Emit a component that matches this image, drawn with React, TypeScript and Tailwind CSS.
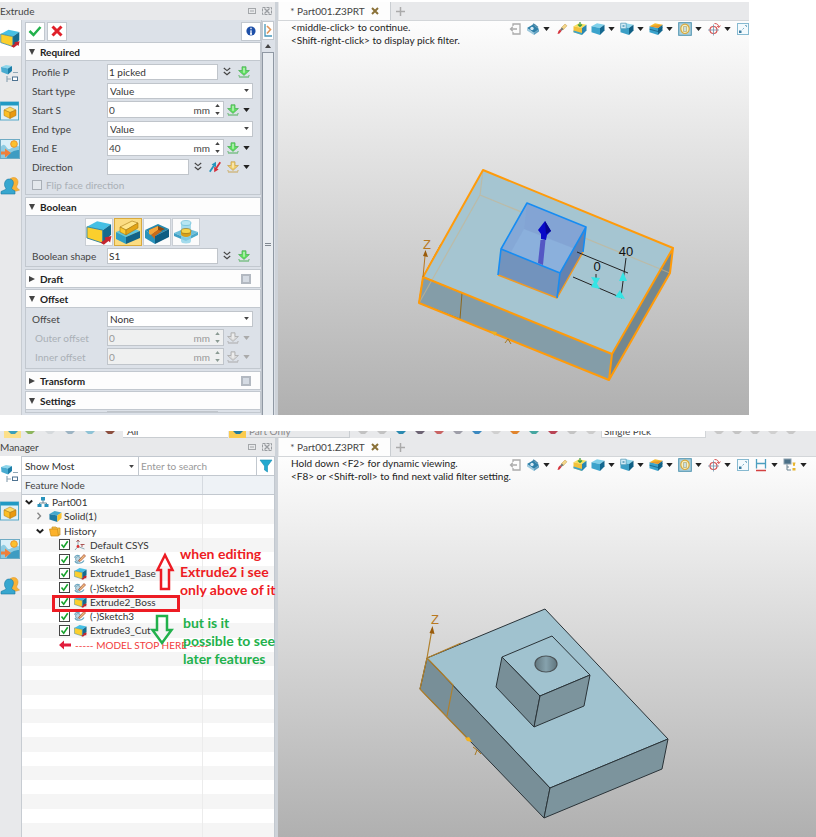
import type { ReactNode } from 'react'

const UI_FONT = "font-['Lato','Open_Sans',sans-serif]"

// ─── Small glyphs ─────────────────────────────────────────────────────────────

function Caret({ className = 'text-[#222]' }: { className?: string }) {
  return (
    <svg viewBox="0 0 8 5" className={`w-[7px] h-1 shrink-0 ${className}`} aria-hidden>
      <path d="M0 0h8L4 5z" fill="currentColor" />
    </svg>
  )
}

function DownArrow({ tone = 'green' }: { tone?: 'green' | 'gold' | 'gray' }) {
  const fill = tone === 'green' ? '#5fe05f' : tone === 'gold' ? '#f0cf6a' : '#dcdcdc'
  const line = tone === 'green' ? '#4fb05a' : tone === 'gold' ? '#c9a655' : '#a9a9a9'
  return (
    <svg viewBox="0 0 12 12" className="size-3" aria-hidden>
      <path d="M4 .8h4v3.700h3.400L6 9.400.6 4.500H4z" fill={fill} stroke={line} strokeWidth="0.8" />
      <path d="M1 11h10M1 9.200v1M11 9.200v1" stroke={line} strokeWidth="1.2" />
      <path d="M6 1.8v5" stroke="#fff" strokeWidth="0.9" />
    </svg>
  )
}

function DoubleChevron() {
  return (
    <svg viewBox="0 0 8 9" className="w-2 h-[9px]" fill="none" stroke="#444" strokeWidth="1.2" aria-hidden>
      <path d="M.8 1 4 3.6 7.200 1M.8 5 4 7.800 7.200 5" />
    </svg>
  )
}

function FlipArrows() {
  return (
    <svg viewBox="0 0 12 12" className="size-3" aria-hidden>
      <path d="M.8 10.800 5 4.500" stroke="#2495bd" strokeWidth="1.8" />
      <path d="M7 .8v5.400L2.600 3.600z" fill="#2495bd" />
      <path d="M11.300 1.200 7 7.500" stroke="#d32f3c" strokeWidth="1.8" />
      <path d="M5.200 11.200V5.800l4.400 2.600z" fill="#d32f3c" />
    </svg>
  )
}

// ─── Solid icons ──────────────────────────────────────────────────────────────

type CubeProps = { top?: string; left?: string; right?: string; className?: string; children?: ReactNode }

function Cube({ top = '#7fd0ea', left = '#3ba3cc', right = '#14688f', className = 'size-[14px]', children }: CubeProps) {
  return (
    <svg viewBox="0 0 14 14" className={`shrink-0 ${className}`} aria-hidden>
      <path d="M.5 4.200 6 1.200l7.500 1.600L9 6z" fill={top} />
      <path d="M.5 4.200 9 6v7L.5 10.200z" fill={left} />
      <path d="m9 6 4.500-3.200v5.700L9 13z" fill={right} />
      {children}
    </svg>
  )
}

function ExtrudeIcon({ className = 'size-[14px]' }: { className?: string }) {
  return (
    <Cube top="#45bfe4" left="#fbcf2d" right="#146b8f" className={className}>
      <path d="M.5 4.200 9 6v7L.5 10.200z" fill="none" stroke="#2b7fa0" strokeWidth=".5" />
      <path d="m7.800 12.600 2.600-1.600-.4-1.100 3.700-.7-.7 3.400-.9-.7-2.500 1.900z" fill="#c4242f" />
    </Cube>
  )
}

function BossIcon() {
  return (
    <svg viewBox="0 0 26 26" className="size-[26px]" aria-hidden>
      <path d="M1 13 14 8l11 4-14 6z" fill="#5cc6e0" />
      <path d="m1 13 10 5v7L1 20z" fill="#2e9fc4" />
      <path d="M11 18 25 12v7l-14 6z" fill="#126387" />
      <path d="M5 8 17 2l6 2-12 7z" fill="#ffe58a" stroke="#a87a14" strokeWidth=".6" />
      <path d="m5 8 6 3v5l-6-3z" fill="#fcc92f" stroke="#a87a14" strokeWidth=".6" />
      <path d="m11 11 12-7v5l-12 7z" fill="#e3a414" stroke="#a87a14" strokeWidth=".6" />
    </svg>
  )
}

function CutIcon() {
  return (
    <svg viewBox="0 0 26 26" className="size-[26px]" aria-hidden>
      <path d="M1 11 14 5l11 5-14 7z" fill="#2489ae" />
      <path d="m1 11 10 6v8L1 19z" fill="#2a93bb" />
      <path d="m11 17 14-7v8l-14 7z" fill="#0f5d82" />
      <path d="m5 11 9-4 7 3-10 5z" fill="#8b4a12" />
      <path d="m5 11 9-4v4l-7 5-2-1z" fill="#f5a53a" />
      <path d="m7 16 7-5 4 1-7 5v3z" fill="#cc6a18" />
    </svg>
  )
}

function IntersectIcon() {
  return (
    <svg viewBox="0 0 26 26" className="size-[26px]" aria-hidden>
      <path d="M1 14 13 9l12 4-12 6z" fill="#6bbfda" />
      <path d="m1 14 12 5v3L1 17z" fill="#3f9fc4" />
      <path d="m13 19 12-6v3l-12 6z" fill="#4aa8c9" />
      <path d="M8 4v18a5 2.500 0 0 0 10 0V4z" fill="#8fd3e8" opacity=".8" />
      <ellipse cx="13" cy="4" rx="5" ry="2.500" fill="#b8e6f2" stroke="#5cb5d2" strokeWidth=".6" />
      <path d="M8 12v3a5 3 0 0 0 10 0v-3z" fill="#d99f18" />
      <ellipse cx="13" cy="12" rx="5" ry="2.500" fill="#f6d44a" stroke="#8b6a18" strokeWidth=".6" />
    </svg>
  )
}

function TreeTabIcon() {
  return (
    <svg viewBox="0 0 20 20" className="size-5" aria-hidden>
      <path d="m1 3 5-2 6 1-4 2.500z" fill="#8ed6ec" />
      <path d="m1 3 7 1.500v6L1.500 8z" fill="#48abd0" />
      <path d="m8 4.500 4-2.500v5l-4 3.500z" fill="#1d7ea8" />
      <path d="M13 8.500h5M7 12v6M7 15h4" stroke="#8fa6b5" strokeWidth="1.200" fill="none" />
      <rect x="12.500" y="13" width="5" height="3.500" fill="#fff" stroke="#4f7391" />
    </svg>
  )
}

function WindowTabIcon() {
  return (
    <svg viewBox="0 0 20 20" className="size-5" aria-hidden>
      <rect x=".5" y="1" width="18" height="18" fill="#dff0f7" stroke="#57a9c9" />
      <rect x=".5" y="1" width="18" height="3.500" fill="#219ac4" />
      <path d="m4 9 6-3 6 3-6 2.500z" fill="#ffdc66" stroke="#a87410" strokeWidth=".5" />
      <path d="m4 9 6 2.500v6L4 14.500z" fill="#fbbf25" stroke="#a87410" strokeWidth=".5" />
      <path d="M16 9v5.500l-6 3v-6z" fill="#e9990f" stroke="#a87410" strokeWidth=".5" />
    </svg>
  )
}

function SceneTabIcon() {
  return (
    <svg viewBox="0 0 20 20" className="size-5" aria-hidden>
      <rect width="20" height="20" fill="#d9eff8" />
      <path d="M0 9c5-8 6 1 9 1s6-6 11-2v12H0z" fill="#8ccbe2" />
      <path d="M6 20c3-7 8-9 14-9v9z" fill="#3f9cc2" />
      <circle cx="14" cy="5" r="3.300" fill="#fcc12d" stroke="#f0952a" />
      <path d="M0 12.500h5v-3l6 4.500-6 4.500v-3H0z" fill="#f0803a" />
      <rect x=".5" y=".5" width="19" height="19" fill="none" stroke="#6fabc4" />
    </svg>
  )
}

function UsersTabIcon() {
  return (
    <svg viewBox="0 0 20 20" className="size-5" aria-hidden>
      <path d="M10 3c4-3 8-1 8 3 0 3-2 4-1 6l2.500 2-3 1h-6z" fill="#f9b234" stroke="#e09a2c" strokeWidth=".6" />
      <path d="M9 3c4 0 5 3 4 6s-2 3-.5 4.500l2.500 1.500v3H1v-2.500l4.500-2c1.500-1-1-2-1-5S6 3 9 3z" fill="#37a7cf" stroke="#1b7ba3" strokeWidth=".6" />
    </svg>
  )
}

// ─── View toolbar icons ───────────────────────────────────────────────────────

const toolIcons: Record<string, ReactNode> = {
  exit: (
    <svg viewBox="0 0 14 14" className="size-[14px]" fill="none" stroke="#ababab" strokeWidth="1.300">
      <path d="M5 4V2h7v10H5v-2M9 7H2.500M4.800 4.800 2.500 7l2.300 2.200" />
    </svg>
  ),
  camera: (
    <svg viewBox="0 0 14 14" className="size-[14px]">
      <path d="m1 6 6-3.500L13 7l-5 4z" fill="#2e7fa8" />
      <path d="m1 6 7 5v2L1 8.500z" fill="#9cc9de" />
      <path d="m8 11 5-4v2.500L8 13z" fill="#5f9fc0" />
      <circle cx="6" cy="6.500" r="1.700" fill="#d8ebf5" />
      <path d="m7 2 2.500 1.500M9.500 3.500 12 5.500" stroke="#4b88a8" strokeWidth="1.500" />
    </svg>
  ),
  eraser: (
    <svg viewBox="0 0 14 14" className="size-[14px]">
      <path d="m6 6 4-4 2 1.800L8 8z" fill="#f3d789" stroke="#c69b4a" strokeWidth=".5" />
      <path d="m5 7.500 2-2L8.500 7l-2 2z" fill="#777" />
      <path d="M3.500 9 5 7.500 6.500 9 4.500 11.500 2.500 12z" fill="#d5333c" />
    </svg>
  ),
  paintBox: (
    <Cube top="#f5e15c" left="#f3c23b" right="#2c87b0">
      <path d="M.5 8.500 9 11v2L.5 10.200z" fill="#3ba3cc" />
      <path d="M7 0v4M5 2.500l2 2 2-2" stroke="#3a9a46" strokeWidth="1.200" fill="none" />
    </Cube>
  ),
  shaded: <Cube />,
  front: (
    <Cube top="#8ed6ec" left="#3b9fc6" right="#106085">
      <path d="M.7 1.200h5.500v5.500H.7z" fill="#d3ecf6" stroke="#5a9fbd" strokeWidth=".8" />
      <path d="M2.500 3h2v2h-2z" fill="#6eabc6" />
    </Cube>
  ),
  section: (
    <Cube top="#f6bb2c" left="#3ba3cc" right="#14688f">
      <path d="m.5 4.200 13-1.400L9 6z" fill="#e8982a" />
      <path d="M.5 7.200 9 9.500l4.500-4" stroke="#0b4b69" fill="none" strokeWidth=".6" />
    </Cube>
  ),
  zoomFit: (
    <svg viewBox="0 0 14 14" className="size-[14px]">
      <rect x=".7" y=".7" width="12.600" height="12.600" fill="#a9d0df" stroke="#4f93b0" />
      <ellipse cx="7" cy="6.800" rx="4.200" ry="4.700" fill="#f9f0bd" stroke="#d9a83c" strokeWidth="1.200" />
      <path d="M5.500 4.500h3v5h-3z" fill="#c9dfe3" stroke="#99905a" strokeWidth=".5" />
    </svg>
  ),
  target: (
    <svg viewBox="0 0 14 14" className="size-[14px]" fill="none">
      <circle cx="6.500" cy="8" r="3.500" stroke="#d65050" strokeWidth="1.200" />
      <path d="M6.500 2.500v11M1 8h11" stroke="#6f93ac" strokeWidth=".8" />
      <path d="M7.500 1.500c3 0 4 1.500 4.500 3.500m-2-1 2 1.500 1.300-2" stroke="#d65050" />
    </svg>
  ),
  frame: (
    <svg viewBox="0 0 14 14" className="size-[14px]">
      <rect x="1.500" y="1.500" width="11" height="11" fill="#f3fafd" stroke="#86b9d0" />
      <path d="M9 3.500h1.500V5M6.500 7.500 8 6" stroke="#7fb0c8" fill="none" />
      <rect x="3" y="8.500" width="2.500" height="2.500" fill="#3b7b9f" />
    </svg>
  ),
  measure: (
    <svg viewBox="0 0 14 14" className="size-[14px]">
      <path d="M2.500 1v9.500M11.500 1v9.500M3 5.500h8" stroke="#4b9fc0" strokeWidth="1.300" />
      <path d="M2 12.500h10" stroke="#d34141" strokeWidth="1.500" />
    </svg>
  ),
  display: (
    <svg viewBox="0 0 14 14" className="size-[14px]">
      <rect x="1" y="1" width="7" height="5" fill="#4b7087" stroke="#8ba0ad" />
      <path d="M4 6.500V12h4M4 9h2" stroke="#6c8492" fill="none" />
      <path d="M9.500 4.500h3L11.700 8h-1.400zM9.500 10h3v2.500h-3z" fill="#e8b52f" />
    </svg>
  ),
}

type Tool = { icon: string; label: string; menu?: boolean }

const tools: Tool[] = [
  { icon: 'exit', label: 'Exit' },
  { icon: 'camera', label: 'View', menu: true },
  { icon: 'eraser', label: 'Erase' },
  { icon: 'paintBox', label: 'Face color' },
  { icon: 'shaded', label: 'Shaded', menu: true },
  { icon: 'front', label: 'Orientation', menu: true },
  { icon: 'section', label: 'Section', menu: true },
  { icon: 'zoomFit', label: 'Zoom', menu: true },
  { icon: 'target', label: 'Pick', menu: true },
  { icon: 'frame', label: 'Fit' },
  { icon: 'measure', label: 'Measure', menu: true },
  { icon: 'display', label: 'Display', menu: true },
]

// ─── Shared window parts ──────────────────────────────────────────────────────

function TitleBar({ title }: { title: string }) {
  return (
    <div className="flex h-[18px] shrink-0 items-center pr-[3px] text-[#444]">
      <h2 className="flex-1">{title}</h2>
      <button type="button" aria-label="Float panel" className="mr-[5px]">
        <svg viewBox="0 0 10 8" className="h-2 w-[10px]" fill="none" stroke="#a4a7aa">
          <rect x="1.500" y="1.500" width="7" height="5" />
          <path d="M3 4h4" />
        </svg>
      </button>
      <button type="button" aria-label="Close panel">
        <svg viewBox="0 0 10 8" className="h-2 w-[10px]" fill="none" stroke="#999ca0">
          <rect x=".5" y=".5" width="9" height="7" strokeDasharray="3 1" />
          <path d="m2.500 1.500 5 5m0-5-5 5" strokeWidth="1.300" />
        </svg>
      </button>
    </div>
  )
}

function SideTabs({ withFeature }: { withFeature?: boolean }) {
  return (
    <nav className="flex w-[22px] shrink-0 flex-col items-start border-r border-[#c7ccd2]">
      {withFeature && (
        <button type="button" aria-label="Feature" className="flex h-9 w-full items-center bg-white">
          <ExtrudeIcon className="size-5" />
        </button>
      )}
      <button
        type="button"
        aria-label="Tree"
        className={`flex h-9 w-full items-center ${withFeature ? '' : 'bg-white'}`}
      >
        <TreeTabIcon />
      </button>
      <button type="button" aria-label="Part view" className="flex h-[38px] w-full items-center"><WindowTabIcon /></button>
      <button type="button" aria-label="Scene" className="flex h-[37px] w-full items-center"><SceneTabIcon /></button>
      <button type="button" aria-label="Roles" className="flex h-[37px] w-full items-center"><UsersTabIcon /></button>
    </nav>
  )
}

function Viewport({ hints, children }: { hints: string[]; children: ReactNode }) {
  return (
    <div className="flex min-w-0 flex-1 flex-col">
      <div className="flex h-[18px] shrink-0 items-center pl-px">
        <button type="button" className="flex h-full w-28 items-center justify-center gap-[6px] border-r border-[#c9cdd1] bg-[#fdfdfd] text-[#444]">
          <span>* Part001.Z3PRT</span>
          <svg viewBox="0 0 8 8" className="size-2" stroke="#8a7137" strokeWidth="2"><path d="m1 1 6 6m0-6L1 7" /></svg>
        </button>
        <button type="button" aria-label="New tab" className="ml-[5px]">
          <svg viewBox="0 0 9 9" className="size-[9px]" stroke="#aaa" strokeWidth="1.500"><path d="M4.500 0v9M0 4.500h9" /></svg>
        </button>
      </div>
      <div className="flex-1 overflow-hidden border-t border-[#d3d6d9] bg-linear-to-b from-[#fdfdfd] to-[#b0b0b0]">
        <div className="flex h-[29px]">
          <div className="w-[230px] shrink-0 pl-[13px] leading-[13px] whitespace-nowrap text-[#222]">
            {hints.map(h => <p key={h}>{h}</p>)}
          </div>
          <div className="flex min-w-0 flex-1 overflow-hidden">
            {tools.map(t => (
              <button
                key={t.icon}
                type="button"
                aria-label={t.label}
                className={`flex h-4 shrink-0 items-center gap-[3px] ${t.menu ? 'w-[29px]' : 'w-[18px]'}`}
              >
                {toolIcons[t.icon]}
                {t.menu && <Caret />}
              </button>
            ))}
          </div>
        </div>
        {children}
      </div>
    </div>
  )
}

// ─── Extrude form ─────────────────────────────────────────────────────────────

function Section({ title, open, check, children }: { title: string; open?: boolean; check?: boolean; children?: ReactNode }) {
  return (
    <section className={`border border-[#c2c8cf] bg-[#dce1e8] ${open ? 'mb-[2px]' : 'mb-px'}`}>
      <div className="flex h-[17px] items-center bg-[#fdfdfd] pr-[9px] pl-[3px]">
        <svg viewBox="0 0 7 7" className="mr-[5px] size-[6px]" fill="#444" aria-hidden>
          <path d={open ? 'M0 0h7L3.500 7z' : 'M0 0l7 3.500L0 7z'} />
        </svg>
        <h3 className="flex-1 font-bold text-[#222]">{title}</h3>
        {check && (
          <input type="checkbox" aria-label={title} className="size-[10px] appearance-none border-2 border-[#b3b9c1] bg-[#d5dbe3]" />
        )}
      </div>
      {children}
    </section>
  )
}

function Row({ label, id, off, children }: { label: string; id: string; off?: boolean; children: ReactNode }) {
  return (
    <div className="flex h-[19px] items-center pl-[6px]">
      <label htmlFor={id} className={`w-[75px] shrink-0 whitespace-nowrap ${off ? 'pl-[3px] text-[#aab0b6]' : 'text-[#444]'}`}>{label}</label>
      {children}
    </div>
  )
}

function PickBox({ id, value, short }: { id: string; value: string; short?: boolean }) {
  return (
    <>
      <input id={id} defaultValue={value} className={`h-4 border border-[#c0c5cb] bg-white px-px text-[#333] ${short ? 'w-[82px]' : 'w-[111px]'}`} />
      <button type="button" aria-label="Expand" className="ml-[5px]"><DoubleChevron /></button>
    </>
  )
}

function SelectBox({ id, value }: { id: string; value: string }) {
  return (
    <div className="relative flex w-[146px] items-center">
      <select id={id} className="h-4 w-full appearance-none border border-[#c0c5cb] bg-white px-[2px] text-[#333]">
        <option>{value}</option>
      </select>
      <svg viewBox="0 0 8 5" className="pointer-events-none absolute right-1 h-[3px] w-[5px]" aria-hidden><path d="M0 0h8L4 5z" fill="#444" /></svg>
    </div>
  )
}

function SpinBox({ id, value, off }: { id: string; value: string; off?: boolean }) {
  return (
    <>
      <div className={`flex h-[17px] w-[117px] items-center border border-[#c0c5cb] pr-[3px] ${off ? 'bg-[#eff0f0] text-[#999]' : 'bg-white text-[#444]'}`}>
        <input id={id} defaultValue={value} disabled={off} className="w-full min-w-0 flex-1 px-px" />
        <span className="mr-[5px]">mm</span>
        <span className="flex flex-col gap-[5px]">
          <button type="button" aria-label="Increase" disabled={off}>
            <svg viewBox="0 0 6 4" className="block h-[3px] w-[5px]" fill={off ? '#8a9a92' : '#444'}><path d="M0 4h6L3 0z" /></svg>
          </button>
          <button type="button" aria-label="Decrease" disabled={off}>
            <svg viewBox="0 0 6 4" className="block h-[3px] w-[5px]" fill={off ? '#8a9a92' : '#444'}><path d="M0 0h6L3 4z" /></svg>
          </button>
        </span>
      </div>
      <button type="button" aria-label="Options" disabled={off} className="ml-[3px] flex items-center gap-1">
        <DownArrow tone={off ? 'gray' : 'green'} />
        <Caret className={off ? 'text-[#aaa]' : 'text-[#222]'} />
      </button>
    </>
  )
}

const booleanModes = [
  { label: 'Base', icon: <ExtrudeIcon className="size-[26px]" /> },
  { label: 'Add', icon: <BossIcon />, active: true },
  { label: 'Remove', icon: <CutIcon /> },
  { label: 'Intersect', icon: <IntersectIcon /> },
]

function ExtrudePanel() {
  return (
    <form className="flex min-w-0 flex-1">
      <div className="w-[239px] bg-[#dce1e8] pl-[3px]">
        <div className="flex h-[22px] items-center">
          <button type="button" aria-label="OK" className="flex h-[19px] w-5 items-center justify-center border border-[#c2c8cf] bg-white">
            <svg viewBox="0 0 14 12" className="h-3 w-[14px]" fill="none" stroke="#22b14c" strokeWidth="2.500"><path d="m1.500 6 4 4 7-8" /></svg>
          </button>
          <button type="button" aria-label="Cancel" className="ml-[2px] flex h-[19px] w-5 items-center justify-center border border-[#c2c8cf] bg-white">
            <svg viewBox="0 0 12 12" className="size-3" stroke="#e0202a" strokeWidth="3"><path d="m1.500 1.500 9 9m0-9-9 9" /></svg>
          </button>
          <button type="button" aria-label="Info" className="ml-auto flex h-[19px] w-5 items-center justify-center border border-[#c2c8cf] bg-white">
            <svg viewBox="0 0 10 10" className="size-[10px]">
              <circle cx="5" cy="5" r="4.600" fill="#1d4fa8" />
              <path d="M5 1.800v1.400M5 4.200V8M4 8h2" stroke="#fff" strokeWidth="1.300" />
            </svg>
          </button>
        </div>

        <Section title="Required" open>
          <div className="border-t border-[#c2c8cf] pt-px">
            <Row label="Profile P" id="profile">
              <PickBox id="profile" value="1 picked" />
              <button type="button" aria-label="Pick" className="ml-[7px]"><DownArrow /></button>
            </Row>
            <Row label="Start type" id="start-type"><SelectBox id="start-type" value="Value" /></Row>
            <Row label="Start S" id="start"><SpinBox id="start" value="0" /></Row>
            <Row label="End type" id="end-type"><SelectBox id="end-type" value="Value" /></Row>
            <Row label="End E" id="end"><SpinBox id="end" value="40" /></Row>
            <Row label="Direction" id="direction">
              <PickBox id="direction" value="" short />
              <button type="button" aria-label="Reverse" className="ml-[7px]"><FlipArrows /></button>
              <button type="button" aria-label="Options" className="ml-[6px] flex items-center gap-1">
                <DownArrow tone="gold" />
                <Caret />
              </button>
            </Row>
            <div className="flex h-[18px] items-center gap-1 pl-[6px] text-[#aab0b6]">
              <input id="flip" type="checkbox" disabled className="size-[10px] appearance-none border border-[#a9afb6] bg-[#e4e8ec]" />
              <label htmlFor="flip">Flip face direction</label>
            </div>
          </div>
        </Section>

        <Section title="Boolean" open>
          <div className="border-t border-[#c2c8cf] pt-[2px] pb-px">
            <div className="flex gap-px pl-[59px]">
              {booleanModes.map(m => (
                <button
                  key={m.label}
                  type="button"
                  aria-label={m.label}
                  className={`flex size-7 items-center justify-center border ${m.active ? 'border-[#d9a93c] bg-[#fbdc82]' : 'border-[#c9ced4] bg-[#fbfbfb]'}`}
                >
                  {m.icon}
                </button>
              ))}
            </div>
            <Row label="Boolean shape" id="shape">
              <PickBox id="shape" value="S1" />
              <button type="button" aria-label="Pick" className="ml-[7px]"><DownArrow /></button>
            </Row>
          </div>
        </Section>

        <Section title="Draft" check />

        <Section title="Offset" open>
          <div className="border-t border-[#c2c8cf] pt-px pb-[2px]">
            <Row label="Offset" id="offset"><SelectBox id="offset" value="None" /></Row>
            <Row label="Outer offset" id="outer" off><SpinBox id="outer" value="0" off /></Row>
            <Row label="Inner offset" id="inner" off><SpinBox id="inner" value="0" off /></Row>
          </div>
        </Section>

        <Section title="Transform" check />

        <Section title="Settings" open>
          <div className="h-[3px] overflow-hidden border-t border-[#c2c8cf] pt-px pl-[81px]">
            <div className="h-4 w-[111px] border border-[#c0c5cb] bg-white" />
          </div>
        </Section>
      </div>

      {/* Panel scrollbar */}
      <div className="flex min-w-0 flex-1 flex-col border-l border-[#c2c8cf] bg-[#dce1e8] pr-px">
        <button type="button" aria-label="Help" className="mt-px flex h-[19px] items-center justify-center border border-[#c2c8cf] bg-white">
          <svg viewBox="0 0 8 13" className="h-[13px] w-2" fill="none">
            <path d="M1 0v12h7" stroke="#4797bb" strokeWidth="1.300" />
            <path d="m3 2 3.500 3.500L3 9.500" stroke="#e0965a" strokeWidth="1.600" />
          </svg>
        </button>
        <div className="flex h-3 items-center justify-center"><svg viewBox="0 0 6 4" className="h-1 w-[6px]" fill="#444"><path d="M0 4h6L3 0z" /></svg></div>
        <div className="flex flex-1 items-center justify-center border border-b-0 border-[#8f98a3] bg-[#e9edf1] pt-5">
          <span className="h-[3px] w-[6px] border-y border-[#808890]" />
        </div>
      </div>
    </form>
  )
}

// ─── Manager tree ─────────────────────────────────────────────────────────────

const featureIcons: Record<string, ReactNode> = {
  csys: (
    <svg viewBox="0 0 12 12" className="size-3" fill="none">
      <path d="M4 1v6.500l6.500 2.500M4 7.500 1 11" stroke="#8fa9b5" />
      <path d="m2.500 3 1.500-2 1.500 2M8 5.500V8M6.500 5.500h4" stroke="#a34646" strokeWidth=".9" />
      <circle cx="4" cy="7.500" r="1.400" fill="#d33" />
    </svg>
  ),
  sketch: (
    <svg viewBox="0 0 12 12" className="size-3">
      <path d="M.8 5c0-3 3-3 5-2M1 8c1 3 7 3 9-.5" stroke="#6fa9c2" fill="none" strokeWidth="1.200" />
      <circle cx="4" cy="6" r="2.500" fill="#bcd9e4" stroke="#5d8ea5" strokeWidth=".7" />
      <path d="m4.500 7.500 5.500-6 1.500 1.500L6 8.500z" fill="#f0c07a" stroke="#a03a2c" strokeWidth=".7" />
    </svg>
  ),
  extrude: <ExtrudeIcon className="size-[13px]" />,
}

const features = [
  { name: 'Default CSYS', icon: 'csys' },
  { name: 'Sketch1', icon: 'sketch' },
  { name: 'Extrude1_Base', icon: 'extrude' },
  { name: '(-)Sketch2', icon: 'sketch' },
  { name: 'Extrude2_Boss', icon: 'extrude' },
  { name: '(-)Sketch3', icon: 'sketch' },
  { name: 'Extrude3_Cut', icon: 'extrude' },
]

function Chevron({ open }: { open?: boolean }) {
  return (
    <svg viewBox="0 0 8 8" className="size-2 shrink-0" fill="none" stroke={open ? '#222' : '#888'} strokeWidth={open ? 2 : 1.4} aria-hidden>
      <path d={open ? 'm.8 2.500 3.200 3 3.200-3' : 'm2.500.8 3 3.200-3 3.200'} />
    </svg>
  )
}

function TreeRow({ className = '', children }: { className?: string; children?: ReactNode }) {
  return (
    <li className="flex odd:bg-white even:bg-[#f5f5f5]">
      <div className={`flex w-[181px] items-center border-r border-[#ececec] whitespace-nowrap text-[#333] ${className}`}>{children}</div>
    </li>
  )
}

function Annotations() {
  return (
    <div className="absolute inset-0 text-sm leading-[18px] font-bold whitespace-nowrap">
      <div className="absolute top-[100px] left-[30px] h-[17px] w-[128px] border-3 border-[#ed1c24]" />
      <svg viewBox="0 0 20 40" className="absolute top-[57px] left-[133px] h-10 w-5" fill="none" stroke="#ed1c24" strokeWidth="2.500">
        <path d="m10 3 7.500 15h-3.500v19H6V18H2.500z" />
      </svg>
      <svg viewBox="0 0 24 32" className="absolute top-[119px] left-[128px] h-8 w-6" fill="none" stroke="#22b14c" strokeWidth="2.500">
        <path d="M7 2h10v14h4.500L12 29 2.500 16H7z" />
      </svg>
      <p className="absolute top-[50px] left-[158px] text-[#ed1c24]">
        when editing<br />Extrude2 i see<br />only above of it
      </p>
      <p className="absolute top-[119px] left-[161px] text-[#22b14c]">
        but is it<br />possible to see<br />later features
      </p>
    </div>
  )
}

function ManagerPanel() {
  return (
    <div className="flex min-w-0 flex-1 flex-col border-r border-[#c2c8cf] bg-white">
      <div className="flex h-5 shrink-0 items-center border-y border-[#c2c8cf]">
        <div className="relative flex h-full w-[117px] items-center border-r border-[#c2c8cf]">
          <select aria-label="Filter" className="w-full appearance-none pl-[3px] text-[#333]"><option>Show Most</option></select>
          <svg viewBox="0 0 8 5" className="pointer-events-none absolute right-1 h-[3px] w-[5px]" aria-hidden><path d="M0 0h8L4 5z" fill="#444" /></svg>
        </div>
        <input type="search" aria-label="Search" placeholder="Enter to search" className="h-full min-w-0 flex-1 pl-[2px] placeholder:text-[#999]" />
        <button type="button" aria-label="Filter tree" className="flex h-full w-[18px] items-center justify-center border-l border-[#c2c8cf]">
          <svg viewBox="0 0 14 14" className="size-[14px]"><path d="M1 1h12L8.500 7v6L5.500 11V7z" fill="#25a9cf" stroke="#168db4" strokeWidth=".6" /></svg>
        </button>
      </div>
      <div className="flex h-[19px] shrink-0 items-center border-b border-[#c2c8cf] bg-[#eef2f6] text-[#444]">
        <div className="flex h-full w-[181px] items-center border-r border-[#d5dae0] pl-[3px]">Feature Node</div>
      </div>
      <div className="relative">
        <ul className="grid h-[342px] auto-rows-fr">
          <TreeRow className="gap-[2px] pl-[3px]">
            <Chevron open />
            <svg viewBox="0 0 12 12" className="mr-px ml-[2px] size-3" aria-hidden>
              <path d="M6 4v3M2.500 9V7h7v2" stroke="#6f8795" fill="none" />
              <path d="M4 1h4v3.500H4zM.5 8h4v3h-4zM7.500 8h4v3h-4z" fill="#2993bd" />
            </svg>
            Part001
          </TreeRow>
          <TreeRow className="gap-[2px] pl-[13px]">
            <Chevron />
            <span className="ml-1"><Cube top="#45a9ce" left="#1e7ca5" right="#fbc32d" className="size-[13px]" /></span>
            Solid(1)
          </TreeRow>
          <TreeRow className="gap-[2px] pl-[14px]">
            <Chevron open />
            <svg viewBox="0 0 12 12" className="mr-px ml-[3px] size-3" aria-hidden>
              <path d="M3 2h4l1 1h3v7H3z" fill="#f6c34c" stroke="#c78a1a" strokeWidth=".7" />
              <path d="M.5 4h8l1 7H2z" fill="#fcb22c" stroke="#c78a1a" strokeWidth=".7" />
            </svg>
            History
          </TreeRow>
          {features.map(f => (
            <TreeRow key={f.name} className="pl-[37px]">
              <label className="flex items-center">
                <span className="relative mr-1 flex">
                  <input type="checkbox" defaultChecked className="peer size-[11px] appearance-none border border-[#444] bg-white" />
                  <svg viewBox="0 0 11 11" className="pointer-events-none absolute inset-0 hidden peer-checked:block" fill="none" stroke="#16a32c" strokeWidth="1.600" aria-hidden>
                    <path d="m2.500 5.500 2.200 2.700 4-6" />
                  </svg>
                </span>
                <span className="flex w-4 items-center">{featureIcons[f.icon]}</span>
                {f.name}
              </label>
            </TreeRow>
          ))}
          <TreeRow className="pl-[37px]">
            <svg viewBox="0 0 12 10" className="mr-1 h-[10px] w-3 shrink-0" aria-hidden><path d="m0 5 5-4.500v3h7v3H5v3z" fill="#e11d3c" /></svg>
            <span className="text-[#f23c3c]">----- MODEL STOP HERE -----</span>
          </TreeRow>
          {Array.from({ length: 13 }, (_, i) => <TreeRow key={i} />)}
        </ul>
        <Annotations />
      </div>
    </div>
  )
}

// ─── Models ───────────────────────────────────────────────────────────────────

function EditingModel() {
  return (
    <svg viewBox="278 50 471 365" className="block h-auto w-full" strokeLinejoin="round" role="img" aria-label="Part while editing Extrude2">
      <path d="M483 170 673 248 612 354 423 277z" fill="#a5c5d1" />
      <path d="M423 277 612 354 609 380 419 303z" fill="#849da8" />
      <path d="M673 248 670 273 609 380 612 354z" fill="#73878f" />
      <path d="M483 170 480 195 419 303M480 195 670 273" fill="none" stroke="#c7b690" strokeWidth="1.200" opacity=".65" />
      <path d="M423 277 441 244M423 277 462 293 460 319 419 303z" fill="none" stroke="#8d681e" />
      <path d="M483 170 673 248 612 354 423 277zM423 277 419 303 609 380 670 273 673 248M612 354 609 380" fill="none" stroke="#ff9b0a" strokeWidth="2" />

      {/* Boss preview */}
      <path d="M527 203 586 227 560 273 501 249z" fill="#8bb0dc" />
      <path d="M527 203 586 227 583 252 524 229z" fill="#7e9dce" opacity=".6" />
      <path d="M527 203 501 249 498 275 524 229z" fill="#7e9dce" opacity=".4" />
      <path d="M501 249 560 273 557 298 498 275z" fill="#7293bd" />
      <path d="M586 227 583 252 557 298 560 273z" fill="#6382b0" />
      <path d="m498 275 59 23 26-46" fill="none" stroke="#ef9a25" strokeWidth="1.500" />
      <path d="M498 275 501 249 527 203 586 227 560 273 501 249M560 273 557 298M586 227 583 252" fill="none" stroke="#168cf2" strokeWidth="1.600" />
      <path d="m540.500 240h5l-2.500 25-5-2z" fill="#5457c4" />
      <path d="m545 221 6 10-4 4-1 5-5-1v-5l-3-4z" fill="#0808c8" />
      <path d="m545 221 6 10-5 3z" fill="#050590" />

      {/* Dimension handles */}
      <path d="m577 252 51 21M573 277l49 21M626 258l-5 39M596 274v10" stroke="#222" />
      <g fill="#35e4e4">
        <path d="m591 277 9 1-4 7zM595 280l5 9-9-2zM623 272l4 9h-8zM620 290l5 9-10-2z" />
      </g>
      <g fontSize="13" fill="#111" textAnchor="middle" className="font-['Liberation_Sans',sans-serif]">
        <text x="597" y="271">0</text>
        <text x="626" y="256">40</text>
        <text x="427" y="249" fill="#b87820">Z</text>
      </g>
      <path d="M425 256 423 277" stroke="#b87820" />
      <path d="m425.500 250 2.500 7-5-1z" fill="#9a5b0a" />
      <path d="m490 331 7 1-2 4z" fill="#f0b020" />
      <path d="m505 343 3-4 3 5" fill="none" stroke="#a87820" />
    </svg>
  )
}

function FullModel() {
  return (
    <svg viewBox="278 486 538 351" className="block h-auto w-full" strokeLinejoin="round" role="img" aria-label="Complete part">
      <g stroke="#2a3338" strokeWidth="1">
        <path d="M545 609 668 739 550 788 427 658z" fill="#a0c2cf" />
        <path d="M427 658 550 788 544 818 420 689z" fill="#788f98" />
        <path d="M668 739 662 769 544 818 550 788z" fill="#7c949d" />
        <path d="M552 636 590 675 540 696 502 657z" fill="#a0c2cf" />
        <path d="M502 657 540 696 534 727 496 687z" fill="#788f98" />
        <path d="M590 675 584 706 534 727 540 696z" fill="#7c949d" />
      </g>
      <defs>
        <linearGradient id="hole">
          <stop offset="0" stopColor="#62777f" />
          <stop offset=".5" stopColor="#86a2ad" />
          <stop offset="1" stopColor="#5f757e" />
        </linearGradient>
      </defs>
      <ellipse cx="546" cy="664" rx="11" ry="8" fill="url(#hole)" stroke="#4b5357" strokeWidth="1.200" />
      <path d="M432 629 427 658 461 643M427 658 420 689 467 738M427 658 453 685 447 716" fill="none" stroke="#b0802c" strokeWidth="1.200" />
      <path d="m432.500 626 2 8-5-1z" fill="#9a5b0a" />
      <path d="m465 738 4-1 3 5-5-1z" fill="#f5b31e" />
      <path d="m473 747 4 3-2 5m2-5 4 4" fill="none" stroke="#a87820" />
      <text x="435" y="624" fontSize="13" fill="#b87820" textAnchor="middle" className="font-['Liberation_Sans',sans-serif]">Z</text>
    </svg>
  )
}

// ─── Ribbon edge above the manager ────────────────────────────────────────────

function Dots({ colors, className = 'gap-[13px]' }: { colors: string[]; className?: string }) {
  return (
    <div className={`flex h-full items-start ${className}`}>
      {colors.map((c, i) => (
        <svg key={i} viewBox="0 0 10 4" className="h-1 w-[10px]" aria-hidden><path d="M0 0h10L7 3H3z" fill={c} /></svg>
      ))}
    </div>
  )
}

function RibbonEdge() {
  return (
    <div className="flex h-[7px] items-end overflow-hidden leading-[14px] whitespace-nowrap text-[#444]">
      <div className="ml-1 flex h-full w-[17px] justify-center bg-[#fce08a]"><Dots colors={['#3b9fb9']} /></div>
      <div className="ml-1 h-full w-[98px]"><Dots colors={['#8db65e', '#d5d9dc', '#9db4c3', '#8fc3d6', '#8c4f3f']} className="gap-[10px]" /></div>
      <div className="h-[14px] w-[105px] border-b border-[#c9cdd1] bg-white pl-1">All</div>
      <div className="ml-px flex h-full w-[17px] justify-center bg-[#fbcb4d]"><Dots colors={['#247b9c']} /></div>
      <div className="h-[14px] w-[104px] border-r border-b border-[#c9cdd1] pl-[3px] text-[#888]">Part Only</div>
      <div className="h-full w-[251px] pl-2">
        <Dots colors={['#c2c2c2', '#c2c2c2', '#2c8ab0', '#6d6474', '#c96464', '#9e9ea8', '#3c89c0', '#d0d0d0', '#e0842c', '#45a6a0', '#b84455', '#c4c4c4', '#ccc']} className="gap-[9px]" />
      </div>
      <div className="h-[14px] w-[105px] border border-t-0 border-[#d2d5d8] bg-white pl-[2px]">Single Pick</div>
      <div className="h-full pl-2"><Dots colors={['#c8c8c8', '#c4c4c4', '#c4c4c4', '#d0d0d0', '#c8c8c8']} className="gap-2" /></div>
    </div>
  )
}

// ─── Page ─────────────────────────────────────────────────────────────────────

export default function App() {
  return (
    <main className={`bg-white pt-[2px] text-[10px] leading-[14px] ${UI_FONT}`}>
      <div className="mr-[67px] flex overflow-hidden bg-[#e8e9eb]">
        <aside className="flex w-[278px] shrink-0 flex-col border-r-3 border-[#cdd2d8]">
          <TitleBar title="Extrude" />
          <div className="flex flex-1">
            <SideTabs withFeature />
            <ExtrudePanel />
          </div>
        </aside>
        <Viewport hints={['<middle-click> to continue.', '<Shift-right-click> to display pick filter.']}>
          <EditingModel />
        </Viewport>
      </div>

      <div className="mt-4 bg-[#e8e9eb]">
        <RibbonEdge />
        <div className="flex overflow-hidden">
          <aside className="flex w-[278px] shrink-0 flex-col border-r-3 border-[#cdd2d8]">
            <TitleBar title="Manager" />
            <div className="flex flex-1">
              <SideTabs />
              <ManagerPanel />
            </div>
          </aside>
          <Viewport hints={['Hold down <F2> for dynamic viewing.', '<F8> or <Shift-roll> to find next valid filter setting.']}>
            <FullModel />
          </Viewport>
        </div>
      </div>
    </main>
  )
}
